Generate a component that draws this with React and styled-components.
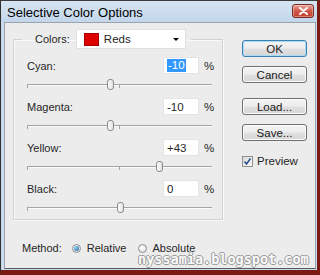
import styled, { createGlobalStyle } from "styled-components";

const GlobalStyle = createGlobalStyle`
  html, body { margin: 0; padding: 0; background: #7b1a12; }
  body {
    font-family: "Liberation Sans", Arial, sans-serif;
    font-size: 11px;
    color: #262626;
  }
  * { box-sizing: border-box; }
`;

const Window = styled.div`
  width: 320px;
  height: 275px;
  display: flex;
  flex-direction: column;
  border-left: 1px solid #2f2f2f;
  border-top: 1px solid #3d3d3d;
  border-right: 3px solid #7b1a12;
  border-bottom: 5px solid #7b1a12;
  background: #c9dbec;
`;

const TitleBar = styled.div`
  height: 21px;
  display: flex;
  align-items: center;
  padding: 0 3px 0 6px;
  background: linear-gradient(#d6e4f2, #c3d6ea);
  font-size: 13px;
  color: #000;
`;

const Title = styled.span`
  flex: 1;
  padding-top: 1px;
`;

const CloseBtn = styled.div`
  width: 22px;
  height: 14px;
  margin-top: -2px;
  border: 1px solid #7a2a22;
  border-radius: 3px;
  background: linear-gradient(#e9a99c, #d0574a 50%, #c2402f);
  display: flex;
  align-items: center;
  justify-content: center;
  box-shadow: inset 0 0 0 1px rgba(255, 255, 255, 0.35);
`;

const Frame = styled.div`
  flex: 1;
  display: flex;
  padding: 0 1px 1px 3px;
`;

const Content = styled.div`
  flex: 1;
  display: flex;
  position: relative;
  background: #ececec;
  border: 1px solid #9aa3ad;
  border-bottom-color: #5a5a5a;
`;

const LeftCol = styled.div`
  padding: 6px 0 0 8px;
  display: flex;
  flex-direction: column;
`;

const Group = styled.fieldset`
  width: 210px;
  margin: 0;
  padding: 8px 8px 2px;
  border: 1px solid #d2d2d2;
  box-shadow: inset 1px 1px 0 #fafafa, 1px 1px 0 #fafafa;
  display: flex;
  flex-direction: column;
  gap: 4px;
`;

const Legend = styled.legend`
  display: flex;
  align-items: center;
  padding: 0 5px 0 13px;
  height: 20px;
`;

const ColorsLabel = styled.span`
  margin-right: 6px;
`;

const Select = styled.div`
  width: 110px;
  height: 20px;
  background: #fff;
  border: 1px solid #e0e0e0;
  display: flex;
  align-items: center;
  padding-left: 7px;
  padding-right: 6px;
`;

const Swatch = styled.span`
  width: 15px;
  height: 13px;
  background: #dd0000;
  border: 1px solid #a80000;
  margin-right: 5px;
`;

const SelectText = styled.span`
  flex: 1;
  font-size: 11.5px;
`;

const Arrow = styled.span`
  width: 0;
  height: 0;
  border-left: 3px solid transparent;
  border-right: 3px solid transparent;
  border-top: 3px solid #000;
`;

const Row = styled.div`
  padding-left: 5px;
`;

const RowTop = styled.div`
  display: flex;
  align-items: center;
  height: 17px;
`;

const RowLabel = styled.span`
  flex: 1;
`;

const ValueBox = styled.div`
  width: 36px;
  height: 17px;
  background: #fff;
  border: 1px solid #e4e4e4;
  padding-left: 3px;
  display: flex;
  align-items: center;
  font-size: 11.5px;
`;

const Selected = styled.span`
  background: #3399ff;
  color: #fff;
  padding: 0 1px;
  line-height: 13px;
`;

const Percent = styled.span`
  margin-left: 5px;
  width: 10px;
  font-size: 11.5px;
`;

const Slider = styled.div`
  position: relative;
  height: 20px;
`;

const Track = styled.div`
  position: absolute;
  left: 0;
  top: 10px;
  width: 185px;
  height: 1px;
  background: #a4a4a4;
  box-shadow: 0 1px 0 #fbfbfb;
`;

const Tick = styled.div`
  position: absolute;
  top: 10px;
  left: ${(p) => p.$x}px;
  width: 1px;
  height: 4px;
  background: #a4a4a4;
`;

const Thumb = styled.div`
  position: absolute;
  top: 5px;
  left: ${(p) => p.$x - 3}px;
  width: 7px;
  height: 11px;
  border: 1px solid #8c8c8c;
  border-radius: 3px;
  background: linear-gradient(90deg, #fdfdfd, #e2e2e2);
`;

const MethodRow = styled.div`
  display: flex;
  align-items: center;
  margin-top: 21px;
  padding-left: 9px;
  height: 14px;
  line-height: 11px;
`;

const MethodLabel = styled.span`
  margin-right: 10px;
`;

const Radio = styled.span`
  width: 9px;
  height: 9px;
  border-radius: 50%;
  border: 1px solid #8a8f96;
  background: radial-gradient(circle at 40% 40%, #fff, #d8dde2);
  display: flex;
  align-items: center;
  justify-content: center;
  margin-right: 6px;
  &::after {
    content: "";
    width: 5px;
    height: 5px;
    border-radius: 50%;
    background: radial-gradient(circle at 35% 35%, #8fd0f5, #1a5c9a);
    display: ${(p) => (p.$on ? "block" : "none")};
  }
`;

const RadioText = styled.span`
  margin-right: 11px;
`;

const RightCol = styled.div`
  margin-left: 19px;
  padding-top: 17px;
  display: flex;
  flex-direction: column;
`;

const Button = styled.div`
  width: 65px;
  height: 17px;
  margin-top: ${(p) => p.$gap || 0}px;
  border: 1px solid ${(p) => (p.$default ? "#3c7fb1" : "#707070")};
  border-radius: 3px;
  background: linear-gradient(#f4f4f4 0%, #ededed 48%, #e0e0e0 52%, #d6d6d6 100%);
  box-shadow: inset 0 0 0 1px ${(p) => (p.$default ? "#a8dcf6" : "#fbfbfb")};
  display: flex;
  align-items: center;
  justify-content: center;
  font-size: 11.5px;
  color: #1a1a1a;
`;

const CheckRow = styled.div`
  display: flex;
  align-items: center;
  margin-top: 14px;
  height: 12px;
`;

const CheckBox = styled.span`
  width: 11px;
  height: 11px;
  border: 1px solid #8e8f8f;
  background: linear-gradient(135deg, #dcdcdc, #fcfcfc);
  display: flex;
  align-items: center;
  justify-content: center;
  margin-right: 4px;
`;

const CheckText = styled.span`
  font-size: 11.5px;
`;

const Watermark = styled.div`
  position: absolute;
  left: 133px;
  top: 230px;
  font-family: "DejaVu Sans Mono", monospace;
  font-weight: bold;
  font-size: 13.5px;
  line-height: 12px;
  color: #fafafa;
  text-shadow: 1px 0 #9a9a9a, -1px 0 #9a9a9a, 0 1px #9a9a9a, 0 -1px #9a9a9a;
`;

const rows = [
  { name: "Cyan", value: -10, selected: true },
  { name: "Magenta", value: -10 },
  { name: "Yellow", value: 43 },
  { name: "Black", value: 0 },
];

const fmt = (v) => (v > 0 ? `+${v}` : `${v}`);

function SliderRow({ name, value, selected }) {
  const x = Math.round(((value + 100) / 200) * 185);
  return (
    <Row>
      <RowTop>
        <RowLabel>{name}:</RowLabel>
        <ValueBox>{selected ? <Selected>{fmt(value)}</Selected> : fmt(value)}</ValueBox>
        <Percent>%</Percent>
      </RowTop>
      <Slider>
        <Track />
        <Tick $x={0} />
        <Tick $x={92} />
        <Thumb $x={x} />
      </Slider>
    </Row>
  );
}

export default function App() {
  return (
    <>
      <GlobalStyle />
      <Window>
        <TitleBar>
          <Title>Selective Color Options</Title>
          <CloseBtn>
            <svg width="9" height="8" viewBox="0 0 9 8">
              <path d="M1 1 L8 7 M8 1 L1 7" stroke="#fff" strokeWidth="2" strokeLinecap="round" />
            </svg>
          </CloseBtn>
        </TitleBar>
        <Frame>
          <Content>
            <LeftCol>
              <Group>
                <Legend>
                  <ColorsLabel>Colors:</ColorsLabel>
                  <Select>
                    <Swatch />
                    <SelectText>Reds</SelectText>
                    <Arrow />
                  </Select>
                </Legend>
                {rows.map((r) => (
                  <SliderRow key={r.name} {...r} />
                ))}
              </Group>
              <MethodRow>
                <MethodLabel>Method:</MethodLabel>
                <Radio $on />
                <RadioText>Relative</RadioText>
                <Radio />
                <RadioText>Absolute</RadioText>
              </MethodRow>
            </LeftCol>
            <RightCol>
              <Button $default>OK</Button>
              <Button $gap={9}>Cancel</Button>
              <Button $gap={15}>Load...</Button>
              <Button $gap={9}>Save...</Button>
              <CheckRow>
                <CheckBox>
                  <svg width="9" height="9" viewBox="0 0 9 9">
                    <path d="M1.5 4.5 L3.5 7 L7.5 1.5" stroke="#2b4f8c" strokeWidth="1.6" fill="none" />
                  </svg>
                </CheckBox>
                <CheckText>Preview</CheckText>
              </CheckRow>
            </RightCol>
            <Watermark>nyssamia.blogspot.com</Watermark>
          </Content>
        </Frame>
      </Window>
    </>
  );
}
